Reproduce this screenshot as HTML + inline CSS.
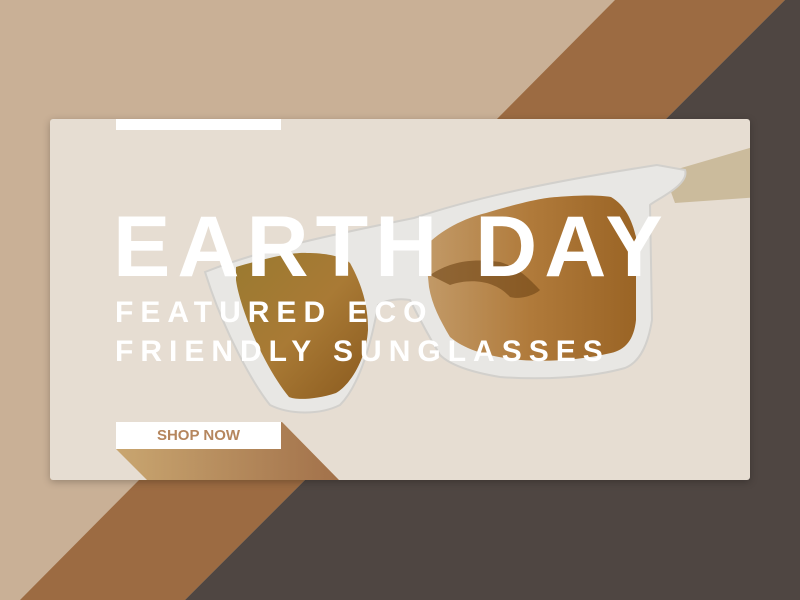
<!DOCTYPE html>
<html><head><meta charset="utf-8"><style>
html,body{margin:0;padding:0;width:800px;height:600px;overflow:hidden;font-family:"Liberation Sans",sans-serif}
.bg{position:absolute;left:0;top:0}
.card{position:absolute;left:50px;top:119px;width:700px;height:361px;background:#e6ddd2;border-radius:3px;overflow:hidden;box-shadow:0 2px 8px rgba(0,0,0,.25)}
.bar{position:absolute;left:66px;top:0;width:165px;height:11px;background:#fff}
.t1{position:absolute;left:63px;top:85px;font-size:86px;font-weight:bold;color:#fff;letter-spacing:7px;line-height:1;white-space:nowrap}
.t2{position:absolute;left:65px;top:174px;font-size:30px;font-weight:bold;color:#fff;letter-spacing:7px;line-height:39px;white-space:nowrap}
.btn{position:absolute;left:66px;top:303px;width:165px;height:27px;background:#fff;color:#b5865e;font-weight:bold;font-size:15px;text-align:center;line-height:28px}
</style></head><body>
<svg class="bg" width="800" height="600">
<rect width="800" height="600" fill="#c9b096"/>
<polygon points="615,0 785,0 185,600 20,600" fill="#9c6b42"/>
<polygon points="785,0 800,0 800,600 185,600" fill="#4f4642"/>
</svg>
<div class="card">
<svg width="700" height="361" style="position:absolute;left:0;top:0">
<defs>
<linearGradient id="lg" x1="0" y1="0" x2="1" y2="1"><stop offset="0" stop-color="#9a7a30"/><stop offset=".5" stop-color="#a97a35"/><stop offset="1" stop-color="#8a5a1e"/></linearGradient>
<linearGradient id="rg" x1="0" y1="0" x2="1" y2="0"><stop offset="0" stop-color="#c29a68"/><stop offset=".5" stop-color="#b07a3a"/><stop offset="1" stop-color="#9a6425"/></linearGradient>
<linearGradient id="sg" x1="0" y1="0" x2="1" y2="0"><stop offset="0" stop-color="#c9a670"/><stop offset="1" stop-color="#a2714a"/></linearGradient>
</defs>
<g transform="translate(-50,-119)">
<polygon points="116,449 282,422 339,480 147,480" fill="url(#sg)"/>
<path d="M664,173 L760,145 L760,197 L675,203 Z" fill="#cbbb9c"/>
<path d="M205,272 C260,250 330,235 414,218 C480,196 560,180 657,165 L685,170 C690,185 655,200 650,205 L652,320 C648,345 640,362 625,368 C590,378 540,380 500,377 C470,372 450,365 440,355 C425,330 415,310 410,300 C400,298 385,300 378,305 C372,340 360,385 340,405 C320,415 290,415 270,405 C250,380 225,330 211,290 Z" fill="#e8e7e4" stroke="#d2d0cc" stroke-width="2"/>
<path d="M236,267 C260,260 290,252 307,253 C330,253 345,258 350,263 C362,285 368,305 368,330 C366,360 350,385 336,393 C315,400 295,400 289,397 C275,380 262,355 254,337 C245,315 238,295 236,280 Z" fill="url(#lg)"/>
<path d="M425,247 C440,230 465,218 486,213 C520,203 540,198 557,197 C580,195 600,195 611,197 C625,205 632,220 636,237 L636,320 C634,340 625,350 611,353 C580,360 550,362 521,360 C490,357 465,350 450,337 C440,320 432,305 429,287 Z" fill="url(#rg)"/>
<path d="M430,275 C450,262 470,258 500,262 C520,268 530,280 540,290 C535,295 520,300 510,297 C495,280 470,278 450,285 Z" fill="#6e4515" opacity=".6"/>
</g>
</svg>
<div class="bar"></div>
<div class="t1">EARTH DAY</div>
<div class="t2">FEATURED ECO<br>FRIENDLY SUNGLASSES</div>
<div class="btn">SHOP NOW</div>
</div>
</body></html>
